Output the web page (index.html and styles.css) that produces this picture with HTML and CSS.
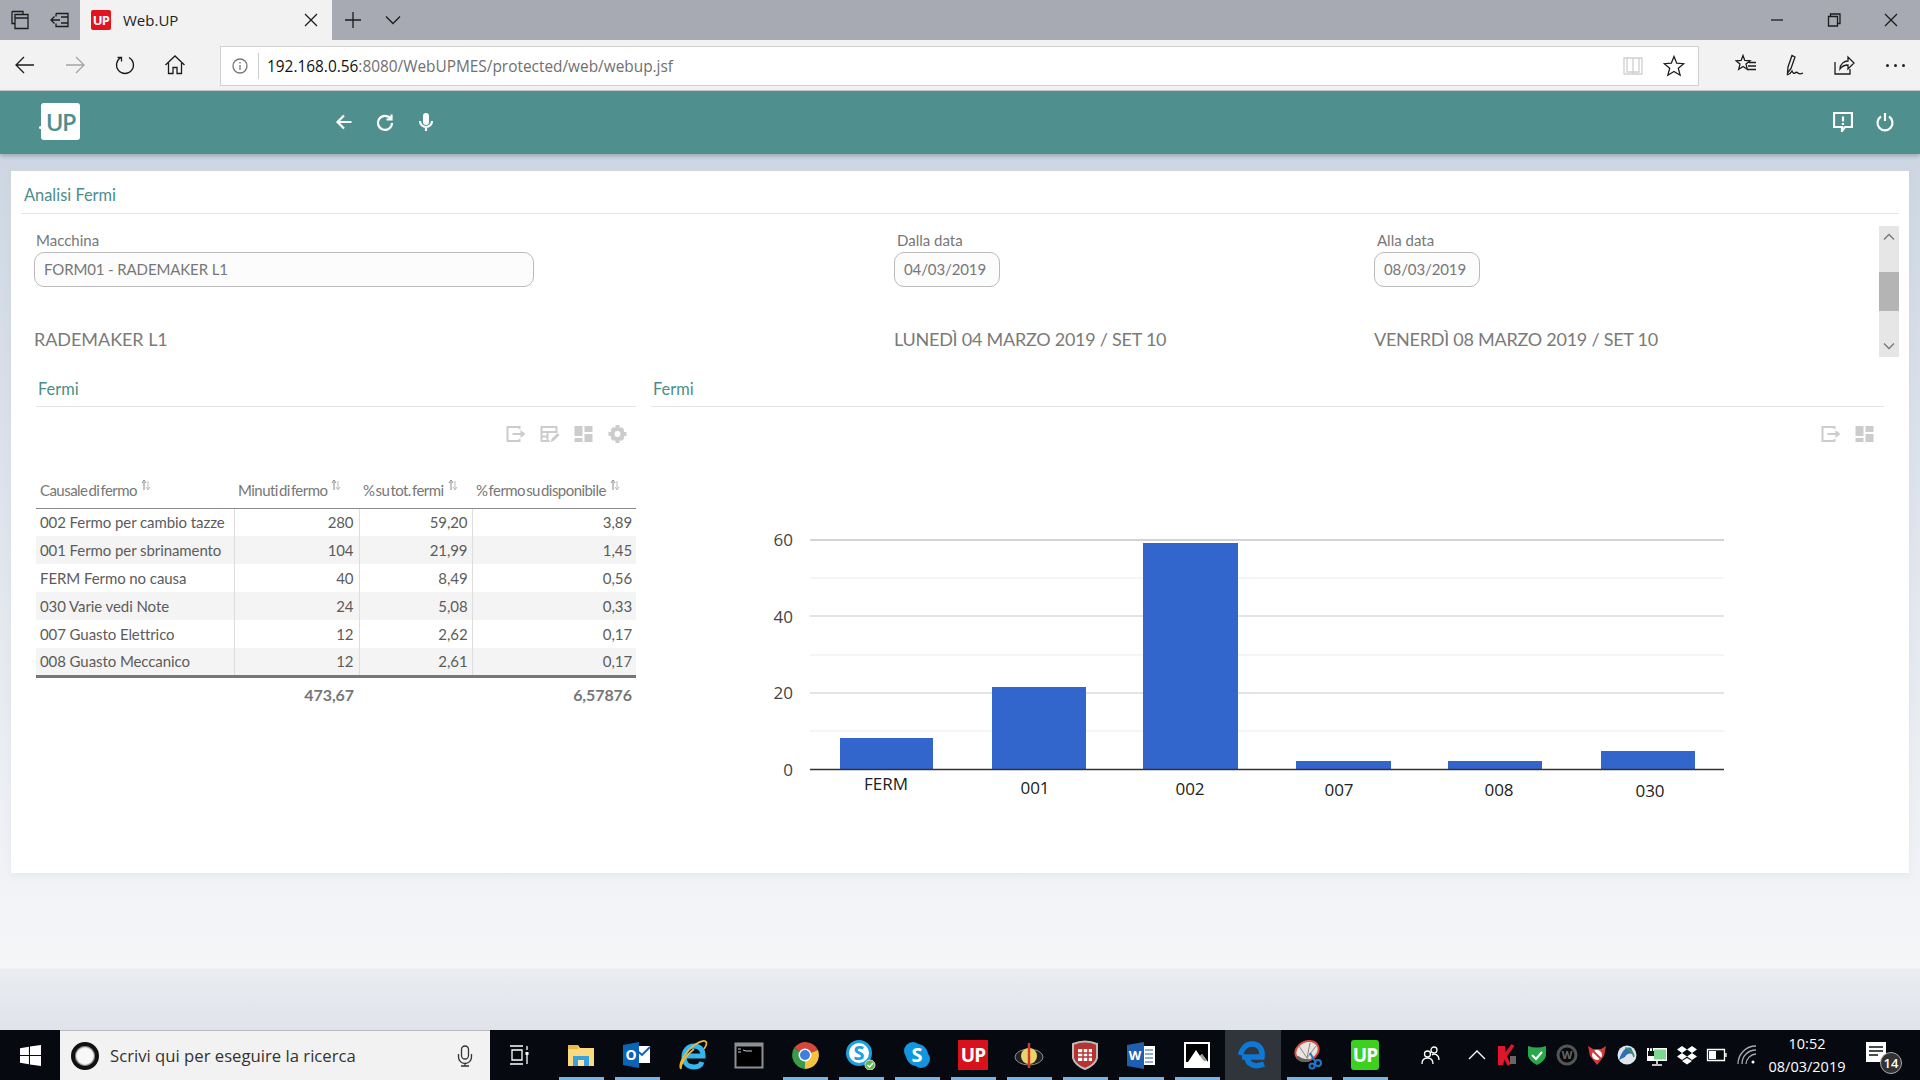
FILE: index.html
```html
<!DOCTYPE html>
<html lang="it">
<head>
<meta charset="utf-8">
<title>Web.UP</title>
<link rel="stylesheet" href="styles.css">
</head>
<body>
<header class="tabbar">
  <div class="tb-left">
    <svg class="ic20" viewBox="0 0 20 20"><path d="M2 1.500h11v3M2 1.500v12h3M5 4.500h13v14H5zM5 8h13" class="ln-dark"/></svg>
    <svg class="ic20" viewBox="0 0 20 20"><path d="M6 3.500h12v13H6v-3M6 6.500v-3M10 10H1M4.500 6.500 1 10l3.500 3.500M11 7h7M11 13h7" class="ln-dark"/></svg>
  </div>
  <div class="tab">
    <span class="fav">UP</span>
    <span class="tab-title">Web.UP</span>
    <svg class="tab-x" viewBox="0 0 14 14"><path d="M1 1l12 12M13 1 1 13" class="ln-dark"/></svg>
  </div>
  <svg class="tb-plus" viewBox="0 0 18 18"><path d="M9 1v16M1 9h16" class="ln-dark"/></svg>
  <svg class="tb-chev" viewBox="0 0 16 10"><path d="M1 1.500 8 8.500l7-7" class="ln-dark"/></svg>
  <div class="win-btns">
    <svg class="ic14" viewBox="0 0 14 14"><path d="M1 7h12" class="ln-dark"/></svg>
    <svg class="ic14" viewBox="0 0 14 14"><path d="M1.500 3.500h9v9.500h-9zM3.500 3.500V1h9.500v9.500h-2.500" class="ln-dark"/></svg>
    <svg class="ic14" viewBox="0 0 14 14"><path d="M1 1l12 12M13 1 1 13" class="ln-dark"/></svg>
  </div>
</header>

<nav class="addr">
  <div class="nav-btns">
    <svg class="ic22" viewBox="0 0 22 22"><path d="M20 11H2M10 3l-8 8 8 8" class="ln-dark"/></svg>
    <svg class="ic22" viewBox="0 0 22 22"><path d="M2 11h18M12 3l8 8-8 8" class="ln-mute"/></svg>
    <svg class="ic22" viewBox="0 0 22 22"><path d="M7 3.500a8.500 8.500 0 1 0 8 0M7.500 7.500V3.500H3.500" class="ln-dark"/></svg>
    <svg class="ic22" viewBox="0 0 22 22"><path d="M1.500 11 11 2l9.500 9M4.500 9v10.500h4.500v-6h4v6h4.500V9" class="ln-dark"/></svg>
  </div>
  <div class="urlbox">
    <svg class="info" viewBox="0 0 16 16"><circle cx="8" cy="8" r="7" class="ln-gray"/><path d="M8 7v5M8 4v1.500" class="ln-gray"/></svg>
    <span class="url-sep"></span>
    <span class="url"><b>192.168.0.56</b>:8080/WebUPMES/protected/web/webup.jsf</span>
    <svg class="book" viewBox="0 0 20 20"><path d="M1 2h18v16H1zM10 2v16M4 2v14h6M16 2v14h-6" class="ln-light"/></svg>
    <svg class="star" viewBox="0 0 22 22"><path d="M11 1.500l2.700 6.700 7.100.5-5.500 4.500 1.800 7-6.100-3.800-6.100 3.800 1.800-7L1.200 8.700l7.100-.5z" class="ln-dark"/></svg>
  </div>
  <div class="nav-right">
    <svg class="ic22" viewBox="0 0 22 22"><path d="M8 1.500l1.800 5 5.200.3-4 3.300 1.300 5.200L8 12.500l-4.300 2.800L5 10.100 1 6.800l5.200-.3zM14 8.500h7M13 12h8M12 15.500h9" class="ln-dark"/></svg>
    <svg class="ic22" viewBox="0 0 22 22"><path d="M8 1.500 4 13l-.5 6 3.500-4.500L11 3zM3 21c3-1 4-2 5-4 1 2 2 3 3 2s2-1 3 0 3 1 5 0" class="ln-dark"/></svg>
    <svg class="ic22" viewBox="0 0 22 22"><path d="M2 8v12h15v-5M7 15c0-5 4-8 8-8V3l6 6-6 6v-4c-3 0-6 1-8 4z" class="ln-dark"/></svg>
    <span class="dots"><i></i><i></i><i></i></span>
  </div>
</nav>

<div class="appbar">
  <div class="logo"><span class="logo-dot"></span>UP</div>
  <div class="app-left">
    <svg class="ic18" viewBox="0 0 18 18"><path d="M16.500 9H2.500M9 2.500 2.500 9 9 15.500" class="ln-white"/></svg>
    <svg class="ic18" viewBox="0 0 18 18"><path d="M14.500 5.500A7 7 0 1 0 16 10M15.500 1.500v5h-5" class="ln-white"/></svg>
    <svg class="ic18" viewBox="0 0 18 18"><rect x="6" y="0" width="6" height="12" rx="3" class="fill-white"/><path d="M3 8a6 6 0 0 0 12 0M9 14v4" class="ln-white"/></svg>
  </div>
  <div class="app-right">
    <svg class="ic20" viewBox="0 0 20 20"><path d="M1 1h18v14h-7l-3 4v-4H1z" class="ln-white"/><path d="M10 4.500v5M10 11v2" class="ln-white"/></svg>
    <svg class="ic20" viewBox="0 0 20 20"><path d="M6 4.500a7.500 7.500 0 1 0 8 0M10 1v8" class="ln-white"/></svg>
  </div>
</div>

<main class="page">
  <section class="card">
    <h1 class="card-title">Analisi Fermi</h1>

    <div class="filters">
      <div class="filter-grid">
        <div class="field">
          <label class="lbl lbl-first">Macchina</label>
          <div class="inp inp-wide">FORM01 - RADEMAKER L1</div>
          <div class="headline headline-first">RADEMAKER L1</div>
        </div>
        <div class="field">
          <label class="lbl">Dalla data</label>
          <div class="inp inp-date">04/03/2019</div>
          <div class="headline">LUNEDÌ 04 MARZO 2019 / SET 10</div>
        </div>
        <div class="field">
          <label class="lbl">Alla data</label>
          <div class="inp inp-date">08/03/2019</div>
          <div class="headline">VENERDÌ 08 MARZO 2019 / SET 10</div>
        </div>
      </div>
      <div class="scroll">
        <svg class="scroll-arrow" viewBox="0 0 12 8"><path d="M1 6.500 6 1.500l5 5" class="ln-gray"/></svg>
        <span class="scroll-thumb"></span>
        <svg class="scroll-arrow" viewBox="0 0 12 8"><path d="M1 1.500l5 5 5-5" class="ln-gray"/></svg>
      </div>
    </div>

    <div class="panels">
      <section class="panel">
        <h2 class="panel-title">Fermi</h2>
        <div class="tools tools-table">
          <svg class="tool" viewBox="0 0 20 20"><path d="M14 5V3H2v14h12v-2M7 10h10" class="ln-tool"/><path d="M15 6l5 4-5 4z" class="fill-tool"/></svg>
          <svg class="tool" viewBox="0 0 20 20"><path d="M10 17H2V3h15v6M2 8h15M8 8v9M2 12.500h6" class="ln-tool"/><path d="M11 18l1-3 6-6 2 2-6 6z" class="fill-tool"/></svg>
          <svg class="tool" viewBox="0 0 20 20"><path d="M1 2h8v10H1zM11 2h8v6h-8zM11 10h8v8h-8zM1 14h8v4H1z" class="fill-tool"/></svg>
          <svg class="tool" viewBox="0 0 20 20"><circle cx="10" cy="10" r="5" class="gear"/><path d="M8 1h4v4H8zM8 15h4v4H8zM1 8h4v4H1zM15 8h4v4h-4zM3 5.800 5.800 3l2.800 2.800-2.800 2.800zM11.400 14.200l2.800-2.800 2.800 2.800-2.800 2.800zM14.200 3 17 5.800l-2.800 2.800-2.800-2.800zM5.800 11.400l2.800 2.800L5.800 17 3 14.200z" class="fill-tool"/></svg>
        </div>
        <table class="grid">
          <colgroup><col class="c1"><col class="c2"><col class="c3"><col class="c4"></colgroup>
          <thead>
            <tr>
              <th>Causale di fermo<svg class="sort" viewBox="0 0 10 12"><path d="M3 11V3M1 4l2-3 2 3" class="sort-up"/><path d="M7 2v8M5 8l2 3 2-3" class="sort-down"/></svg></th>
              <th>Minuti di fermo<svg class="sort" viewBox="0 0 10 12"><path d="M3 11V3M1 4l2-3 2 3" class="sort-up"/><path d="M7 2v8M5 8l2 3 2-3" class="sort-down"/></svg></th>
              <th>% su tot. fermi<svg class="sort" viewBox="0 0 10 12"><path d="M3 11V3M1 4l2-3 2 3" class="sort-up"/><path d="M7 2v8M5 8l2 3 2-3" class="sort-down"/></svg></th>
              <th>% fermo su disponibile<svg class="sort" viewBox="0 0 10 12"><path d="M3 11V3M1 4l2-3 2 3" class="sort-up"/><path d="M7 2v8M5 8l2 3 2-3" class="sort-down"/></svg></th>
            </tr>
          </thead>
          <tbody>
            <tr><td class="left">002 Fermo per cambio tazze</td><td>280</td><td>59,20</td><td>3,89</td></tr>
            <tr><td class="left">001 Fermo per sbrinamento</td><td>104</td><td>21,99</td><td>1,45</td></tr>
            <tr><td class="left">FERM Fermo no causa</td><td>40</td><td>8,49</td><td>0,56</td></tr>
            <tr><td class="left">030 Varie vedi Note</td><td>24</td><td>5,08</td><td>0,33</td></tr>
            <tr><td class="left">007 Guasto Elettrico</td><td>12</td><td>2,62</td><td>0,17</td></tr>
            <tr><td class="left">008 Guasto Meccanico</td><td>12</td><td>2,61</td><td>0,17</td></tr>
          </tbody>
          <tfoot>
            <tr><td></td><td>473,67</td><td></td><td>6,57876</td></tr>
          </tfoot>
        </table>
      </section>

      <section class="panel">
        <h2 class="panel-title">Fermi</h2>
        <div class="tools tools-chart">
          <svg class="tool" viewBox="0 0 20 20"><path d="M14 5V3H2v14h12v-2M7 10h10" class="ln-tool"/><path d="M15 6l5 4-5 4z" class="fill-tool"/></svg>
          <svg class="tool" viewBox="0 0 20 20"><path d="M1 2h8v10H1zM11 2h8v6h-8zM11 10h8v8h-8zM1 14h8v4H1z" class="fill-tool"/></svg>
        </div>
        <svg class="chart" viewBox="651 490 1233 330">
          <path class="gl-strong" d="M810 540H1724"/>
          <path class="gl-minor" d="M810 578H1724M810 655H1724M810 731H1724"/>
          <path class="gl-major" d="M810 616H1724M810 693H1724"/>
          <rect class="bar" x="840" y="738" width="93" height="31"/>
          <rect class="bar" x="992" y="687" width="94" height="82"/>
          <rect class="bar" x="1143" y="543" width="95" height="226"/>
          <rect class="bar" x="1296" y="761" width="95" height="8"/>
          <rect class="bar" x="1448" y="761" width="94" height="8"/>
          <rect class="bar" x="1601" y="751" width="94" height="18"/>
          <path class="axis" d="M810 769.500H1724"/>
          <text class="ylab" x="793" y="546">60</text>
          <text class="ylab" x="793" y="623">40</text>
          <text class="ylab" x="793" y="699">20</text>
          <text class="ylab" x="793" y="776">0</text>
          <text class="xlab" x="886" y="790">FERM</text>
          <text class="xlab" x="1035" y="794">001</text>
          <text class="xlab" x="1190" y="795">002</text>
          <text class="xlab" x="1339" y="796">007</text>
          <text class="xlab" x="1499" y="796">008</text>
          <text class="xlab" x="1650" y="797">030</text>
        </svg>
      </section>
    </div>
  </section>
</main>

<footer class="taskbar">
  <div class="start">
    <svg class="win" viewBox="0 0 20 20"><path d="M0 3l8.500-1.300v7.800H0zM9.500 1.500 20 0v9.500H9.500zM0 10.500h8.500v7.800L0 17zM9.500 10.500H20V20L9.500 18.500z" class="fill-white"/></svg>
  </div>
  <div class="search">
    <span class="cortana"></span>
    <span class="search-text">Scrivi qui per eseguire la ricerca</span>
    <svg class="search-mic" viewBox="0 0 16 22"><rect x="4.500" y="1" width="7" height="13" rx="3.500" class="ln-mic"/><path d="M1.500 9v3a6.500 6.500 0 0 0 13 0V9M8 18.500V21M4 21h8" class="ln-mic"/></svg>
  </div>
  <div class="taskview">
    <svg class="ic20" viewBox="0 0 20 20"><path d="M0 1h13M0 19h13M2 5h10v10H2zM17 1v4M17 10v9" class="ln-white-thin"/><rect x="15.500" y="7" width="3" height="3" class="fill-white"/></svg>
  </div>
  <div class="slots">
    <div class="slot on">
      <svg class="ic30" viewBox="0 0 30 30"><path d="M2 5h10l2 3h14v18H2z" fill="#fbd97f"/><path d="M2 5h10v4H2z" fill="#e9b949"/><path d="M7 16h16v10H7z" fill="#3aa0e0"/><path d="M12 20h6v6h-6z" fill="#fde7a7"/></svg>
    </div>
    <div class="slot on">
      <svg class="ic30" viewBox="0 0 30 30"><path d="M11 6h17v17H11z" fill="#fff"/><path d="M11 7l9 8 8-8" fill="none" stroke="#0a64b8" stroke-width="2"/><path d="M1 5l16-3v26L1 25z" fill="#0a64b8"/><text class="ico-txt" x="9" y="20" font-size="14" fill="#fff">O</text></svg>
    </div>
    <div class="slot">
      <svg class="ic30" viewBox="0 0 30 30"><path d="M6 16h19C25 9 21 6 16 6 10 6 6 11 6 17c0 6 4 10 10 10 4 0 7-2 8-5" fill="none" stroke="#35b6ee" stroke-width="5"/><path d="M3 29C0 24 8 10 18 4c5-3 9-4 10-2 1 1 0 4-2 7M3 29c-1-4 5-14 13-20" fill="none" stroke="#e8b93a" stroke-width="1.800"/></svg>
    </div>
    <div class="slot">
      <svg class="ic30" viewBox="0 0 30 30"><rect x="1.500" y="3.500" width="27" height="24" fill="#000" stroke="#8d8f92" stroke-width="2"/><path d="M1 5h28" stroke="#8d8f92" stroke-width="3"/><path d="M4 9h3M9 10l3 1h6M4 12h3" stroke="#ccc" fill="none"/></svg>
    </div>
    <div class="slot on">
      <svg class="ic30" viewBox="0 0 30 30"><path d="M15 15 4 8A14 14 0 0 1 28 10z" fill="#d6473b"/><path d="M15 15 28 10A14 14 0 0 1 15 29z" fill="#f5c33c"/><path d="M15 15v14A14 14 0 0 1 4 8z" fill="#3a9c4a"/><circle cx="15" cy="15" r="6.500" fill="#fff"/><circle cx="15" cy="15" r="5" fill="#3e7fe0"/></svg>
    </div>
    <div class="slot on">
      <svg class="ic30" viewBox="0 0 30 30"><circle cx="13" cy="13" r="11.500" fill="#fff" stroke="#1ba0e2" stroke-width="3"/><text class="ico-txt" x="13" y="20" font-size="20" fill="#1ba0e2">S</text><circle cx="24" cy="25" r="5" fill="#5eb84a" stroke="#ddd"/><path d="M21.500 25l2 2 3.500-4" stroke="#fff" stroke-width="1.500" fill="none"/></svg>
    </div>
    <div class="slot on">
      <svg class="ic30" viewBox="0 0 30 30"><circle cx="11" cy="11" r="9" fill="#1296e0"/><circle cx="19" cy="19" r="9" fill="#1296e0"/><circle cx="15" cy="15" r="11" fill="#1296e0"/><text class="ico-txt" x="15" y="22" font-size="20" fill="#fff">S</text></svg>
    </div>
    <div class="slot on">
      <svg class="ic30" viewBox="0 0 30 30"><rect width="30" height="30" fill="#d8111d"/><text class="ico-txt ico-cond" x="15" y="22" font-size="19" fill="#fff">UP</text></svg>
    </div>
    <div class="slot on">
      <svg class="ic30" viewBox="0 0 30 30"><ellipse cx="15" cy="17" rx="14" ry="8" fill="#222" stroke="#888"/><circle cx="15" cy="16" r="8" fill="#e9d36a"/><path d="M15 3v25" stroke="#d33a2c" stroke-width="2.500"/></svg>
    </div>
    <div class="slot on">
      <svg class="ic30" viewBox="0 0 30 30"><path d="M3 4q12-5 24 0v14q-2 7-12 11Q5 25 3 18z" fill="#b8332f" stroke="#bdbdbd" stroke-width="2"/><path d="M8 9h14v12H8z" fill="#fff"/><path d="M8 13h14M8 17h14M13 9v12M18 9v12" stroke="#b8332f" stroke-width="1.500"/></svg>
    </div>
    <div class="slot on">
      <svg class="ic30" viewBox="0 0 30 30"><path d="M1 5l17-3v27L1 26z" fill="#1f5eb0"/><path d="M18 6h11v19H18z" fill="#fff"/><path d="M19 10h8M19 14h8M19 18h8M19 22h8" stroke="#1f5eb0"/><text class="ico-txt" x="9" y="20" font-size="13" fill="#fff">W</text></svg>
    </div>
    <div class="slot on">
      <svg class="ic30" viewBox="0 0 30 30"><rect x="2" y="2" width="26" height="26" fill="#fff"/><rect x="4" y="4" width="22" height="18" fill="#000"/><path d="M6 22 14 10l4 6 2-2 6 8z" fill="#fff"/><path d="M18 16l2-2 5 7h-3z" fill="#999"/></svg>
    </div>
    <div class="slot slot-active">
      <svg class="ic30" viewBox="0 0 30 30"><path d="M4 17h20C25 8 20 4 14 4 8 4 4 9 2.500 15M9 17c0 7 7 11 17 7" fill="none" stroke="#0f78d4" stroke-width="5.500"/></svg>
    </div>
    <div class="slot on">
      <svg class="ic30" viewBox="0 0 30 30"><ellipse cx="13" cy="11" rx="12" ry="9.500" transform="rotate(-25 13 11)" fill="#e9e4e0" stroke="#d94b3b" stroke-width="2"/><path d="M13 18 5 6M13 18l3-15M13 18l9-12" stroke="#888"/><path d="M3 17q6 5 12 3" stroke="#666" stroke-width="3" fill="none"/><path d="M16 13l6 10" stroke="#1e78c8" stroke-width="2"/><circle cx="24" cy="23" r="3" fill="none" stroke="#1e78c8" stroke-width="2"/><circle cx="18" cy="26" r="2.500" fill="none" stroke="#1e78c8" stroke-width="2"/></svg>
    </div>
    <div class="slot on">
      <svg class="ic30" viewBox="0 0 30 30"><rect x="1" width="28" height="30" rx="3" fill="#3cd11f"/><text class="ico-txt ico-cond" x="15" y="22" font-size="19" fill="#fff">UP</text></svg>
    </div>
  </div>
  <div class="tray">
    <svg class="people" viewBox="0 0 20 20"><circle cx="13" cy="5" r="3" class="ln-white-thin"/><circle cx="6.500" cy="9" r="3" class="ln-white-thin"/><path d="M1 19c0-4 2-6 5.500-6s5.500 2 5.500 6M11 10c2-1.500 7-1 7 5" class="ln-white-thin"/></svg>
    <div class="tray-icons">
      <svg class="ic22" viewBox="0 0 22 22"><path d="M3 15 11 7l8 8" class="ln-white-thin"/></svg>
      <svg class="ic22" viewBox="0 0 22 22"><path d="M2 2h7l1 9-3 10H2z" fill="#e0162b"/><path d="M17 1 9 12l4 9" fill="none" stroke="#e0162b" stroke-width="3.500"/><path d="M14 12h6v8h-6z" fill="#666"/></svg>
      <svg class="ic22" viewBox="0 0 22 22"><path d="M2 2q9 3 18 0v10q-2 6-9 9-7-3-9-9z" fill="#27a84b"/><path d="M6 11l4 4 6-7" stroke="#fff" stroke-width="2" fill="none"/></svg>
      <svg class="ic22" viewBox="0 0 22 22"><circle cx="11" cy="11" r="9" fill="none" stroke="#555" stroke-width="3"/><text class="ico-txt" x="11" y="15" font-size="11" fill="#666">W</text></svg>
      <svg class="ic22" viewBox="0 0 22 22"><path d="M2 2l5 3h8l5-3-2 10-7 9-7-9z" fill="#d23a3a"/><circle cx="11" cy="11" r="5" fill="#fff"/><path d="M7 7l8 8" stroke="#d23a3a" stroke-width="2"/></svg>
      <svg class="ic22" viewBox="0 0 22 22"><circle cx="11" cy="11" r="9.500" fill="#dfe6ee"/><path d="M3 16C6 6 11 2 15 4l4 8c-4-4-8-3-10 1z" fill="#2d6fb8"/><path d="M9 4c3 0 7 3 9 9" stroke="#3f9c4a" stroke-width="1.500" fill="none"/></svg>
      <svg class="ic22" viewBox="0 0 22 22"><path d="M1 4h20v13H1z" fill="#fff"/><path d="M8 5.500h12v10H8z" fill="#7dd88f"/><path d="M11 17v3M6 21h10" stroke="#fff" stroke-width="1.500"/><rect x="2" y="7" width="6" height="5" fill="#111"/><path d="M3.500 7V5a1.500 1.500 0 0 1 3 0v2" stroke="#111" fill="none"/></svg>
      <svg class="ic22" viewBox="0 0 22 22"><path d="M6 2l5 3.500L6 9 1 5.500zM16 2l5 3.500L16 9l-5-3.500zM6 9l5 3.500L6 16l-5-3.500zM16 9l5 3.500-5 3.500-5-3.500zM6 17l5-3 5 3-5 3.500z" class="fill-white"/></svg>
      <svg class="ic22" viewBox="0 0 22 22"><path d="M1.500 5.500h17v11h-17zM20 9v4" class="ln-white-thin"/><rect x="3" y="7" width="7" height="8" class="fill-white"/></svg>
      <svg class="ic22" viewBox="0 0 22 22"><path d="M2 20C2 10 10 2 20 2M6 20c0-8 6-14 14-14M10 20c0-5 5-10 10-10" class="ln-gray-thin"/><circle cx="17" cy="18" r="1.500" class="fill-white"/></svg>
    </div>
    <div class="clock"><span>10:52</span><span>08/03/2019</span></div>
    <div class="notif">
      <svg class="notif-ic" viewBox="0 0 20 20"><path d="M0 0h20v20H0z" class="fill-white"/><path d="M3 5h14M3 9h14M3 13h9" stroke="#111" stroke-width="1.500"/></svg>
      <span class="badge">14</span>
    </div>
  </div>
</footer>
</body>
</html>
```

FILE: styles.css
```css
* { box-sizing: border-box; }
html, body { margin: 0; padding: 0; }
body {
  width: 1920px;
  height: 1080px;
  overflow: hidden;
  display: flex;
  flex-direction: column;
  font-family: "Lato", "Open Sans", sans-serif;
  color: #666;
  background: #fff;
}
svg { display: block; flex: none; }

/* shared strokes */
.ln-dark, .ln-mute, .ln-gray, .ln-light, .ln-white, .ln-white-thin, .ln-gray-thin, .ln-tool, .ln-mic { fill: none; stroke-width: 1.3; }
.ln-dark { stroke: #1c1c1c; }
.ln-mute { stroke: #a5a5a5; }
.ln-gray { stroke: #777; }
.ln-light { stroke: #cfcfcf; }
.ln-white { stroke: #fff; stroke-width: 2.2; }
.ln-white-thin { stroke: #fff; }
.ln-gray-thin { stroke: #aaa; }
.ln-tool { stroke: #ccc; stroke-width: 2; }
.ln-mic { stroke: #333; }
.fill-white { fill: #fff; }
.fill-tool { fill: #ccc; }
.gear { fill: none; stroke: #ccc; stroke-width: 4; }
.ic14 { width: 14px; height: 14px; }
.ic18 { width: 18px; height: 18px; }
.ic20 { width: 20px; height: 20px; }
.ic22 { width: 22px; height: 22px; }
.ic30 { width: 30px; height: 30px; }
.ico-txt { font-family: "Open Sans", sans-serif; font-weight: 700; text-anchor: middle; }
.ico-cond { letter-spacing: -1px; }

/* title bar */
.tabbar {
  flex: none;
  height: 40px;
  display: flex;
  align-items: center;
  background: #a7aab2;
}
.tb-left { width: 80px; padding-left: 10px; display: flex; gap: 20px; }
.tab {
  width: 252px;
  height: 40px;
  background: #f2f2f2;
  display: flex;
  align-items: center;
  padding: 0 14px 0 11px;
}
.fav {
  width: 20px;
  height: 20px;
  background: #e2141f;
  color: #fff;
  font: 700 13px/20px "Open Sans", sans-serif;
  letter-spacing: -0.8px;
  text-align: center;
  border-radius: 2px;
}
.tab-title { margin-left: 12px; margin-bottom: 1px; font: 15px "Open Sans", sans-serif; color: #222; flex: 1; }
.tab-x { width: 14px; height: 14px; }
.tb-plus { width: 18px; height: 18px; margin-left: 12px; }
.tb-chev { width: 16px; height: 10px; margin-left: 23px; }
.win-btns { margin-left: auto; display: flex; gap: 43px; padding-right: 22px; }

/* address bar */
.addr {
  flex: none;
  height: 51px;
  display: flex;
  align-items: center;
  background: #f2f2f2;
  border-bottom: 1px solid #c9c9c9;
}
.nav-btns { width: 220px; padding-left: 14px; display: flex; gap: 28px; }
.urlbox {
  width: 1479px;
  height: 40px;
  margin-top: 1px;
  background: #fff;
  border: 1px solid #d0d0d0;
  display: flex;
  align-items: center;
  padding-left: 11px;
}
.info { width: 16px; height: 16px; }
.url-sep { width: 1px; height: 26px; background: #ccc; margin: 0 8px 0 10px; }
.url { margin-top: 1px; font: 15.400px "Open Sans", sans-serif; color: #707070; flex: 1; }
.url b { font-weight: 400; color: #111; }
.book { width: 20px; height: 20px; margin-right: 20px; }
.star { width: 22px; height: 22px; margin-right: 13px; }
.nav-right { padding-left: 36px; display: flex; align-items: center; gap: 27px; }
.dots { display: flex; gap: 5px; margin-left: 4px; }
.dots i { width: 3px; height: 3px; background: #222; border-radius: 50%; }

/* app bar */
.appbar {
  flex: none;
  height: 63px;
  display: flex;
  align-items: center;
  background: #4f908e;
  box-shadow: 0 2px 4px rgba(60, 80, 90, .35);
  position: relative;
  padding-left: 41px;
  padding-bottom: 2px;
}
.logo {
  width: 39px;
  height: 37px;
  background: #fff;
  border-radius: 3px;
  color: #4f908e;
  font: 600 24px/37px "Open Sans", sans-serif;
  letter-spacing: -1.6px;
  text-align: center;
  position: relative;
}
.logo-dot { position: absolute; left: -2px; bottom: 11px; width: 3px; height: 3px; background: #fff; border-radius: 50%; }
.app-left { margin-left: 255px; display: flex; gap: 23px; }
.app-right { margin-left: auto; padding-right: 25px; display: flex; gap: 22px; }

/* page */
.page {
  flex: 1;
  min-height: 0;
  padding: 17px 11px 0;
  background: linear-gradient(180deg, #cdd6e2 0, #f5f6f8 814px, #eaecf1 815px, #e0e3e9 100%);
}
.card {
  height: 702px;
  background: #fff;
  padding: 0 10px;
  box-shadow: 0 2px 6px rgba(190, 200, 210, .25);
}
.card-title {
  margin: 0;
  height: 43px;
  padding: 14px 0 0 3px;
  font-size: 16.400px;
  line-height: 20px;
  font-weight: 400;
  color: #4a8d8b;
  border-bottom: 1px solid #e4e4e4;
}

/* filters */
.filters {
  height: 131px;
  margin-top: 12px;
  display: flex;
  overflow: hidden;
}
.filter-grid {
  flex: 1;
  display: grid;
  grid-template-columns: 860px 480px 1fr;
  padding: 5px 0 0 13px;
}
.lbl { display: block; padding-left: 3px; font-size: 15px; line-height: 18px; color: #777; }
.lbl-first { padding-left: 2px; }
.inp {
  height: 35px;
  margin-top: 3px;
  padding: 0 9px;
  font-size: 15px;
  letter-spacing: -0.12px;
  line-height: 33px;
  color: #777;
  background: #fcfcfc;
  border: 1px solid #bbb;
  border-radius: 10px;
}
.inp-wide { width: 500px; }
.inp-date { width: 106px; }
.headline { margin-top: 40px; font-size: 18px; letter-spacing: -0.25px; line-height: 24px; color: #7a7a7a; }
.headline-first { letter-spacing: -0.05px; }
.scroll {
  width: 20px;
  background: #e6e6e6;
  display: flex;
  flex-direction: column;
  align-items: center;
  padding-top: 7px;
  padding-bottom: 7px;
}
.scroll-arrow { width: 12px; height: 8px; }
.scroll-thumb { width: 20px; height: 43px; margin-top: 31px; margin-bottom: 31px; background: #b4b4b4; }

/* panels */
.panels {
  display: grid;
  grid-template-columns: 600px 1233px;
  gap: 15px;
  margin: 0 15px;
}
.panel-title {
  margin: 0;
  height: 50px;
  padding: 22px 0 0 2px;
  font-size: 16.400px;
  line-height: 20px;
  font-weight: 400;
  color: #4a8d8b;
  border-bottom: 1px solid #e4e4e4;
}
.tools { display: flex; justify-content: flex-end; align-items: center; margin-top: 17px; height: 20px; }
.tools-table { gap: 13px; padding-right: 8px; }
.tools-chart { gap: 13px; padding-right: 9px; }
.tool { width: 21px; height: 20px; }

/* table */
.grid {
  width: 600px;
  margin-top: 26px;
  border-collapse: collapse;
  table-layout: fixed;
  font-size: 15px;
  letter-spacing: -0.08px;
  color: #5c5c5c;
}
.c1 { width: 198px; }
.c2 { width: 125px; }
.c3 { width: 113px; }
.c4 { width: 164px; }
.grid th {
  height: 38px;
  padding: 0 0 0 4px;
  font-weight: 400;
  font-size: 15px;
  letter-spacing: -0.55px;
  word-spacing: -2.200px;
  color: #777;
  text-align: left;
  border-bottom: 1px solid #8a8a8a;
  white-space: nowrap;
}
.grid td {
  height: 28px;
  padding: 0 4px 0 0;
  text-align: right;
  white-space: nowrap;
}
.grid td:nth-child(2) { padding-right: 5px; }
.grid td.left { text-align: left; padding-left: 4px; }
.grid tbody td { border-right: 1px solid #ddd; }
.grid tbody td:last-child { border-right: 0; }
.grid tbody tr:nth-child(even) { background: #f4f4f4; }
.grid tfoot td { height: 36px; font-size: 16px; font-weight: 700; color: #777; border-top: 3px solid #777; }
.sort { display: inline-block; width: 10px; height: 12px; margin-left: 4px; vertical-align: 5px; }
.sort-up { fill: none; stroke: #888; }
.sort-down { fill: none; stroke: #bbb; }

/* chart */
.chart { width: 1233px; height: 330px; margin-top: 46px; }
.gl-strong { stroke: #c4c4c4; stroke-width: 1.5; }
.gl-major { stroke: #c9c9c9; }
.gl-minor { stroke: #ebebeb; stroke-width: 1.2; }
.bar { fill: #3366cc; }
.axis { stroke: #333; stroke-width: 1.5; }
.ylab { font: 17px "Open Sans", sans-serif; fill: #444; text-anchor: end; }
.xlab { font: 17px "Open Sans", sans-serif; fill: #222; text-anchor: middle; }

/* taskbar */
.taskbar {
  flex: none;
  height: 50px;
  display: flex;
  background: #060a10;
  position: relative;
}
.start { width: 60px; display: flex; align-items: center; justify-content: center; }
.win { width: 21px; height: 21px; }
.search {
  width: 430px;
  display: flex;
  align-items: center;
  padding: 0 17px 0 11px;
  background: #f2f2f2;
  border-top: 1px solid #bbb;
}
.cortana {
  width: 28px;
  height: 28px;
  border-radius: 50%;
  border: 4px solid #111;
  background: #f8f8f8;
  box-shadow: inset 0 0 1px 1px #777;
}
.search-text { margin-left: 11px; flex: 1; font: 16.700px "Open Sans", sans-serif; color: #333; }
.search-mic { width: 16px; height: 22px; }
.taskview { width: 63px; display: flex; align-items: center; justify-content: center; padding-right: 4px; }
.slots { display: flex; }
.slot {
  width: 56px;
  height: 50px;
  display: flex;
  align-items: center;
  justify-content: center;
  position: relative;
}
.slot.on::after {
  content: "";
  position: absolute;
  left: 6px;
  bottom: 0;
  width: 45px;
  height: 3px;
  background: #76b5ea;
}
.slot-active { background: #30343b; }
.tray { margin-left: auto; display: flex; align-items: center; color: #fff; padding-right: 12px; }
.people { width: 20px; height: 20px; margin: 0 21px 0 10px; }
.tray-icons { width: 300px; display: grid; grid-template-columns: repeat(10, 30px); justify-items: center; }
.clock {
  width: 90px;
  display: flex;
  flex-direction: column;
  align-items: center;
  gap: 3px;
  font: 14.500px/20px "Open Sans", sans-serif;
}
.notif { width: 56px; height: 50px; position: relative; display: flex; align-items: center; justify-content: center; }
.notif-ic { width: 20px; height: 20px; margin-top: -6px; margin-left: -8px; }
.badge {
  position: absolute;
  left: 28px;
  top: 22px;
  width: 22px;
  height: 22px;
  border-radius: 50%;
  background: #333;
  border: 1px solid #aaa;
  font: 600 13px/20px "Open Sans", sans-serif;
  text-align: center;
}
```
